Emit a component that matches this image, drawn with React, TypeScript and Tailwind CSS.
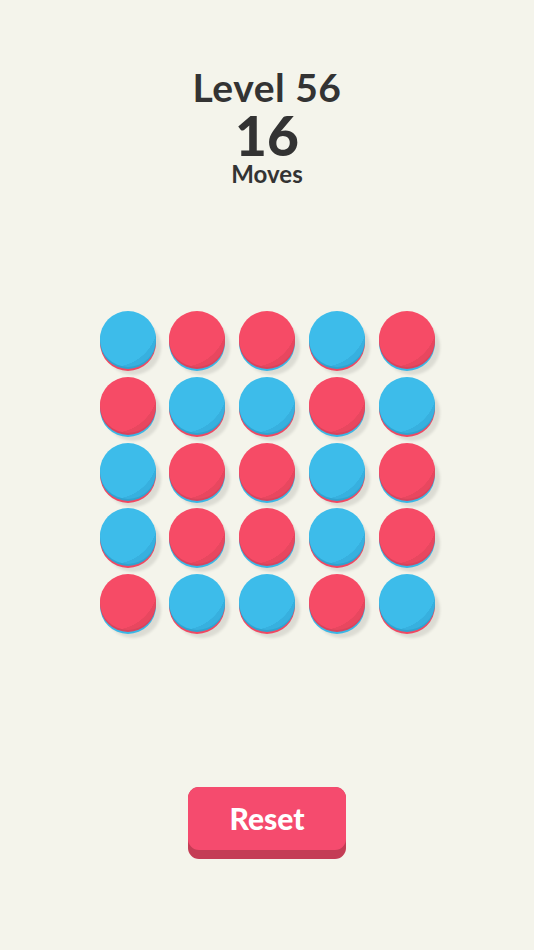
import React from "react";

const grid = [
  "BRRBR",
  "RBBRB",
  "BRRBR",
  "BRRBR",
  "RBBRB",
];

function Coin({ c }: { c: string }) {
  const blue = c === "B";
  return (
    <div className="relative w-[56px] h-[60px]">
      <div
        className={`absolute left-0 top-[4px] w-[56px] h-[56px] rounded-full shadow-[5px_4px_3px_rgba(0,0,0,0.10)] ${
          blue ? "bg-[#F04862]" : "bg-[#3AB7E6]"
        }`}
      />
      <div
        className={`absolute left-0 top-[2px] w-[56px] h-[56px] rounded-full ${
          blue ? "bg-[#2FA3D0]" : "bg-[#D8435C]"
        }`}
      />
      <div
        className={`absolute left-0 top-0 w-[56px] h-[56px] rounded-full ${
          blue
            ? "bg-[radial-gradient(circle_at_22%_18%,#3DBCEA_0,#3DBCEA_72%,#37B0DF_72.5%,#37B0DF_100%)]"
            : "bg-[radial-gradient(circle_at_22%_18%,#F64B66_0,#F64B66_72%,#E8475F_72.5%,#E8475F_100%)]"
        }`}
      />
    </div>
  );
}

export default function App() {
  return (
    <div
      className="w-[534px] h-[950px] bg-[#F4F4EB] flex flex-col items-center text-[#333333]"
      style={{ fontFamily: "Lato, 'Noto Sans', sans-serif" }}
    >
      <div className="h-[311px] pt-[67px] flex flex-col items-center">
        <div className="text-[39px] leading-[40px] font-bold tracking-[0.5px]">Level 56</div>
        <div className="text-[55px] leading-[56px] font-black">16</div>
        <div className="text-[24px] leading-[21px] font-bold">Moves</div>
      </div>
      <div className="grid grid-cols-5 gap-x-[13.75px] gap-y-[5.75px]">
        {grid.join("").split("").map((c, i) => (
          <Coin key={i} c={c} />
        ))}
      </div>
      <div className="mt-[153px] relative w-[158px] h-[72px]">
        <div className="absolute inset-0 rounded-[11px] bg-[#C43D55]" />
        <div className="absolute left-0 top-0 w-[158px] h-[63px] rounded-[11px] bg-[#F54B6E] flex items-center justify-center text-white text-[30px] font-black">
          Reset
        </div>
      </div>
    </div>
  );
}
